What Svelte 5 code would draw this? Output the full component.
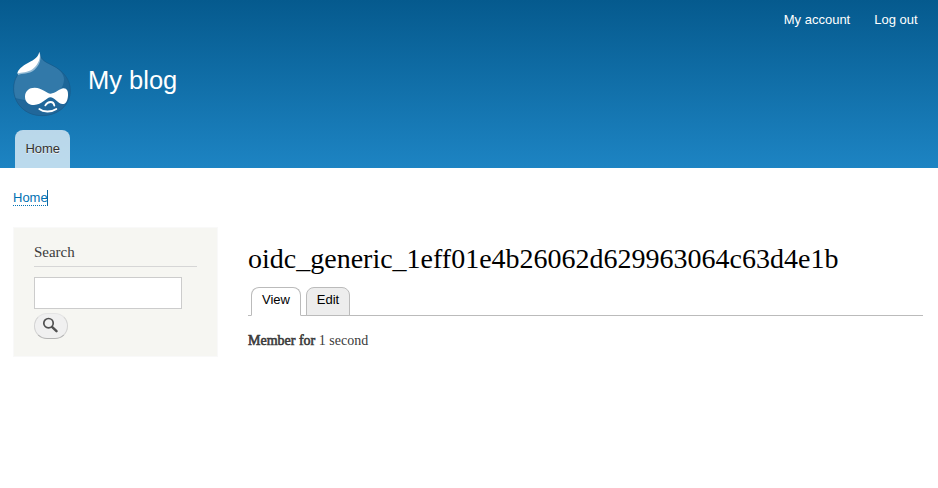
<script>
  const accountLinks = ['My account', 'Log out'];
  const title = 'oidc_generic_1eff01e4b26062d629963064c63d4e1b';
</script>

<div class="page">
  <header>
    <nav class="account">
      {#each accountLinks as label}<a href="#top">{label}</a>{/each}
    </nav>
    <div class="branding">
      <svg class="logo" width="68" height="72" viewBox="0 0 204 216" aria-hidden="true">
        <defs>
          <clipPath id="drop"><path d="M94 11C96 32 109 41 129 50C165 67 187 93 187 128C187 171 150 203 102 203C53 203 17 168 17 122C17 91 31 74 54 58C76 43 94 35 94 11Z" /></clipPath>
        </defs>
        <g clip-path="url(#drop)">
          <rect width="204" height="216" fill="#1d6698" />
          <path d="M94 8C97 32 109 41 129 50C153 61 168 77 168 94C168 126 137 150 98 156C65 162 38 155 15 148V70L60 40Z" fill="#3279a9" />
          <path d="M15 151C50 164 91 163 124 150L187 151V204H15Z" fill="#21679a" />
        </g>
        <path d="M94 11C96 32 109 41 129 50C165 67 187 93 187 128C187 171 150 203 102 203C53 203 17 168 17 122C17 91 31 74 54 58C76 43 94 35 94 11Z" fill="none" stroke="#185b89" stroke-width="2" />
        <path d="M29 82C32 69 46 55 66 45C82 37 93 29 95 13C101 32 96 52 79 66C62 80 43 74 29 82Z" fill="#94bbd5" />
        <path d="M28 77C29 65 42 54 61 44C80 34 91 27 94 11C99 28 92 48 75 62C59 75 39 71 28 77Z" fill="#fff" />
        <path d="M51 146C51 129 63 119 80 119C103 119 116 137 128 137C142 137 154 122 167 121C177 121 181 130 180 143C179 158 173 169 164 168C150 168 139 148 127 148C116 148 102 171 78 171C61 171 51 161 51 146Z" fill="#fff" />
        <path d="M112 172C116 165 121 162 128 162C135 162 138 167 139 173M94 183C105 192 129 194 145 183" fill="none" stroke="#fff" stroke-width="5.5" stroke-linecap="round" />
      </svg>
      <div class="site-name">My blog</div>
    </div>
    <nav class="primary"><a href="#home">Home</a></nav>
  </header>

  <div class="crumbs"><a href="#home">Home</a></div>

  <div class="main">
    <aside>
      <h2>Search</h2>
      <input type="text" aria-label="Search" />
      <button aria-label="Search">
        <svg width="16" height="16" viewBox="0 0 16 16"><circle cx="5.5" cy="5.2" r="4.7" fill="none" stroke="#505050" stroke-width="1.7" /><path d="M9 8.8L13.5 13.2" stroke="#505050" stroke-width="2.5" stroke-linecap="round" /></svg>
      </button>
    </aside>
    <section>
      <h1>{title}</h1>
      <nav class="tabs"><a class="active" href="#view">View</a><a href="#edit">Edit</a></nav>
      <p><b>Member for</b> 1 second</p>
    </section>
  </div>
</div>

<style>
  .page { height: 488px; background: #fff; overflow: hidden; color: #3b3b3b; font: 14px/21px "Liberation Serif", serif; }
  * { box-sizing: border-box; }
  a { text-decoration: none; font-family: "Liberation Sans", sans-serif; font-size: 13px; }
  header { height: 168px; display: flex; flex-direction: column; background: linear-gradient(#055a8e, #1d84c3); }
  .account { height: 48px; display: flex; justify-content: flex-end; gap: 24px; padding: 9px 20.4px 0 0; }
  .account a { color: #fff; }
  .branding { height: 82px; display: flex; padding-left: 8px; }
  .logo { flex: none; }
  .site-name { padding: 17px 0 0 12px; color: #fff; font: 25.5px/30px "Liberation Sans", sans-serif; }
  .primary { padding-left: 15px; display: flex; }
  .primary a { width: 55px; height: 38px; padding: 8px 0 0 .5px; text-align: center; background: rgba(255,255,255,.7); color: #333; border-radius: 8px 8px 0 0; text-shadow: 0 1px #eee; }
  .crumbs { height: 59px; padding: 22px 0 0 13px; display: flex; }
  .crumbs a { height: 16px; line-height: 16px; color: #0071b3; border-bottom: 1px dotted #0071b3; border-right: 1px solid #0f67a0; width: 35px; }
  .main { display: flex; gap: 30px; padding-left: 13px; }
  aside { width: 205px; height: 130px; padding: 14px 20px; background: #f6f6f2; border: 1px solid #f9f9f9; }
  h2 { margin: 0 0 10px; height: 25px; border-bottom: 1px solid #d6d6d6; font: 14.98px/21px "Liberation Serif", serif; }
  input { display: block; width: 148px; height: 32px; border: 1px solid #ccc; background: #fff; margin: 0 0 4px; }
  button { display: flex; align-items: flex-start; width: 34px; height: 26px; padding: 4px 0 0 8px; border: 1px solid #e4e4e4; border-bottom-color: #b4b4b4; border-left-color: #d2d2d2; border-right-color: #d2d2d2; border-radius: 13px; background: #f0f0f0; }
  button svg { flex: none; overflow: visible; }
  section { width: 675px; }
  h1 { margin: 0; padding-top: 16px; height: 60px; color: #000; font: 28px/32px "Liberation Serif", serif; }
  .tabs { height: 29px; display: flex; gap: 5px; padding-left: 3px; border-bottom: 1px solid #bbb; }
  .tabs a { width: 44px; height: 29px; border: 1px solid #bbb; border-radius: 8px 8px 0 0; background: #ededed; color: #000; text-align: center; line-height: 24px; }
  .tabs a.active { width: 50px; background: #fff; border-bottom-color: #fff; }
  p { margin: 14px 0 0; }
  b { font-weight: normal; -webkit-text-stroke: .6px #3b3b3b; }
</style>
